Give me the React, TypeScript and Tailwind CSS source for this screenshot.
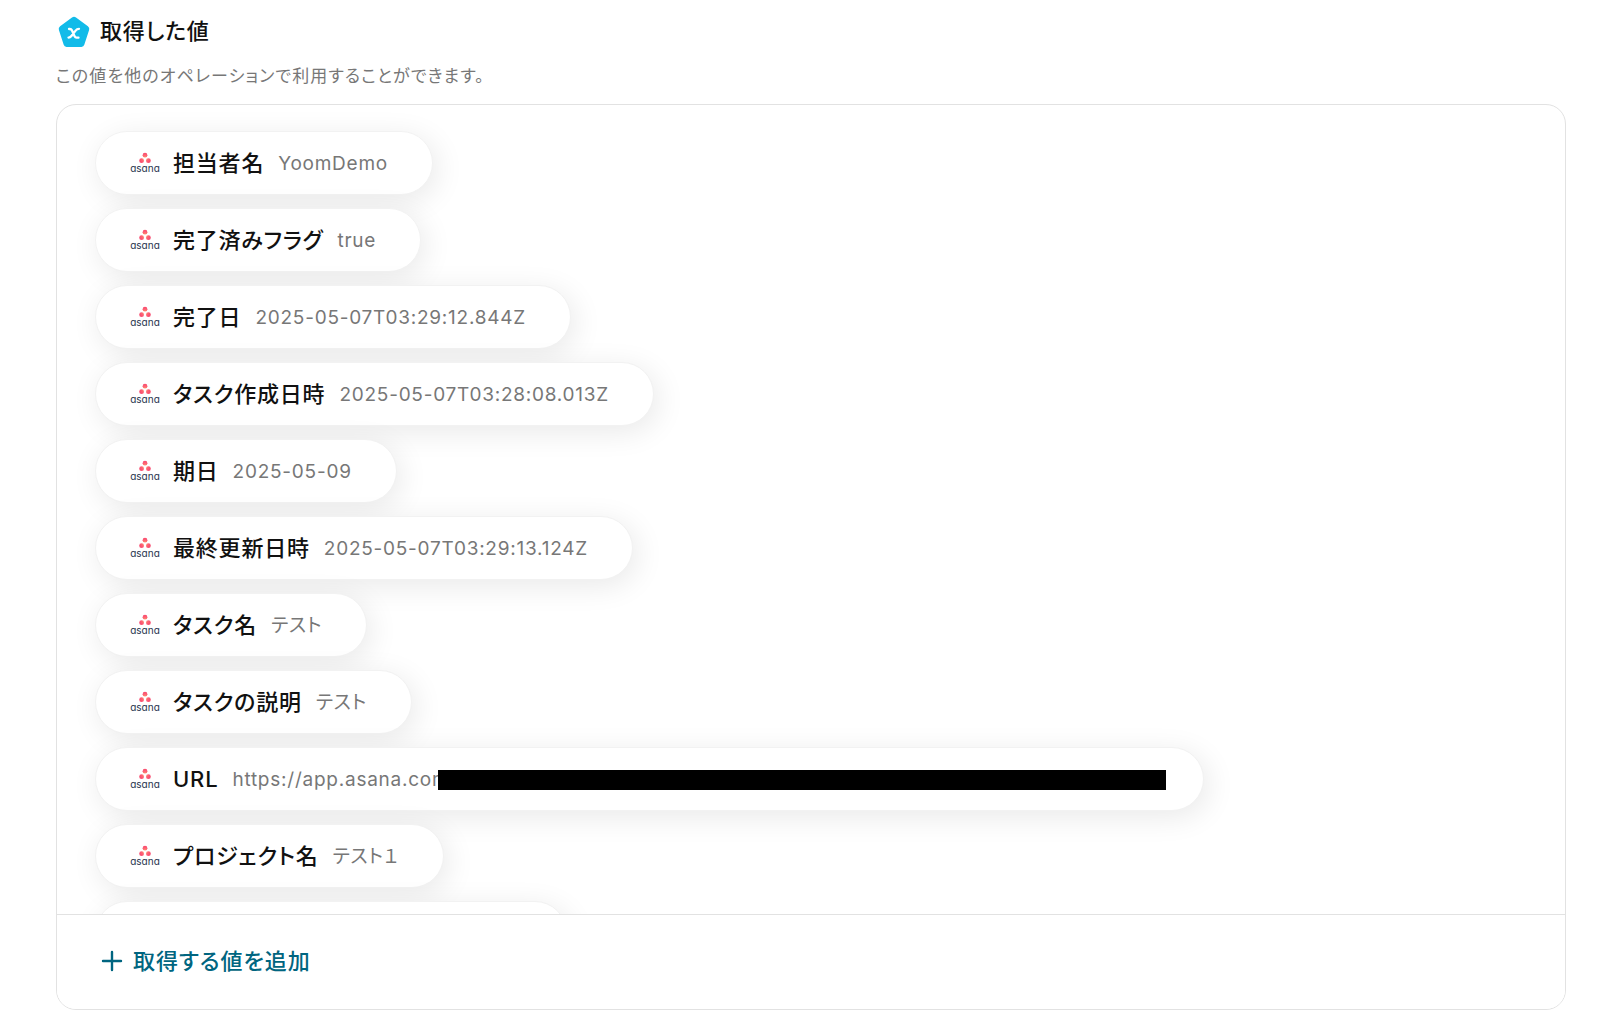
type Item = {
  label: string;
  value: string;
};

const items: Item[] = [
  { label: "担当者名", value: "YoomDemo" },
  { label: "完了済みフラグ", value: "true" },
  { label: "完了日", value: "2025-05-07T03:29:12.844Z" },
  { label: "タスク作成日時", value: "2025-05-07T03:28:08.013Z" },
  { label: "期日", value: "2025-05-09" },
  { label: "最終更新日時", value: "2025-05-07T03:29:13.124Z" },
  { label: "タスク名", value: "テスト" },
  { label: "タスクの説明", value: "テスト" },
  { label: "URL", value: "https://app.asana.com" },
  { label: "プロジェクト名", value: "テスト１" },
];

function OutputIcon() {
  return (
    <svg width="32" height="32" viewBox="0 0 32 32" aria-hidden="true">
      <path
        d="M14 1.6a3.4 3.4 0 0 1 4 0l11.9 8.6a3.4 3.4 0 0 1 1.2 3.8l-4.8 14.8a3 3 0 0 1-2.9 2.1H8.6a3 3 0 0 1-2.9-2.1L.9 14a3.4 3.4 0 0 1 1.2-3.8Z"
        fill="#12bbe9"
      />
      <path
        d="M11 13h.9c1 0 1.6.4 2 1.3l2.7 6c.4.9 1 1.4 2 1.4h1.9M21 12.8c-1.5 0-2.5.6-3.4 1.8l-4.2 5.4c-.8 1-1.5 1.6-2.9 1.6"
        fill="none"
        stroke="#fff"
        strokeWidth="2.3"
        strokeLinecap="round"
      />
    </svg>
  );
}

function AsanaLogo() {
  return (
    <svg width="32" height="22" viewBox="0 0 32 22" role="img" aria-label="asana">
      <defs>
        <radialGradient
          id="asana"
          cx="16"
          cy="6.5"
          r="7"
          gradientUnits="userSpaceOnUse"
        >
          <stop offset="0" stopColor="#ffa562" />
          <stop offset="0.5" stopColor="#fd5f74" />
          <stop offset="1" stopColor="#f6406c" />
        </radialGradient>
      </defs>
      <g fill="url(#asana)">
        <circle cx="16" cy="3.2" r="2.4" />
        <circle cx="12.6" cy="8.7" r="2.4" />
        <circle cx="19.4" cy="8.7" r="2.4" />
      </g>
      <text
        x="16"
        y="20"
        textAnchor="middle"
        fill="#27334d"
        className="font-['Inter'] text-[10px] tracking-normal [font-feature-settings:'cv11']"
      >
        asana
      </text>
    </svg>
  );
}

function ValueChip({ label, value }: Item) {
  return (
    <li className="flex h-16 w-fit shrink-0 items-center rounded-full border border-[#f2f2f2] bg-white pr-11 pl-[33px] shadow-[4px_6px_30px_rgba(0,0,0,0.09)]">
      <AsanaLogo />
      <span className="ml-3 text-[22px] font-medium text-[#111]">{label}</span>
      {label === "URL" ? (
        <span className="relative ml-3.5 w-[927px] pt-0.5 text-[19px] tracking-[0.04em] text-[#777]">
          {value}
          <span className="absolute top-1.5 -right-[7px] left-[206px] h-5 bg-black" />
        </span>
      ) : (
        <span className="ml-3.5 pt-0.5 text-[19px] tracking-[0.04em] text-[#777]">
          {value}
        </span>
      )}
    </li>
  );
}

function App() {
  return (
    <main className="flex h-screen flex-col bg-white pt-4 pr-[34px] pb-3.5 pl-14 font-['Inter','Noto_Sans_CJK_JP',sans-serif] tracking-[0.05em] [font-feature-settings:'palt']">
      <div className="flex h-8 items-center gap-2.5 pl-0.5">
        <OutputIcon />
        <h2 className="pb-0.5 text-[22px] font-medium text-[#111]">取得した値</h2>
      </div>
      <p className="mt-4 text-[17px] leading-6 tracking-[0.065em] text-[#777]">
        この値を他のオペレーションで利用することができます。
      </p>

      <section className="mt-4 flex min-h-0 flex-1 flex-col overflow-hidden rounded-[20px] border border-[#e2e2e2]">
        <ul className="flex min-h-0 flex-1 flex-col gap-[13px] overflow-y-auto pt-[26px] pl-[38px] [scrollbar-width:none]">
          {items.map((item) => (
            <ValueChip key={item.label} {...item} />
          ))}
          <li className="h-16 w-[472px] shrink-0 rounded-full border border-[#f2f2f2] bg-white shadow-[4px_6px_30px_rgba(0,0,0,0.09)]" />
        </ul>
        <div className="flex h-[95px] shrink-0 items-center border-t border-[#e2e2e2] bg-white pb-0.5 pl-11">
          <button
            type="button"
            className="flex items-center gap-2.5 text-[22px] font-medium tracking-[0.045em] text-[#006580]"
          >
            <svg width="22" height="22" viewBox="0 0 22 22" aria-hidden="true">
              <path
                d="M11 2v18M2 11h18"
                stroke="currentColor"
                strokeWidth="2.4"
                strokeLinecap="round"
              />
            </svg>
            取得する値を追加
          </button>
        </div>
      </section>
    </main>
  );
}

export default App;
